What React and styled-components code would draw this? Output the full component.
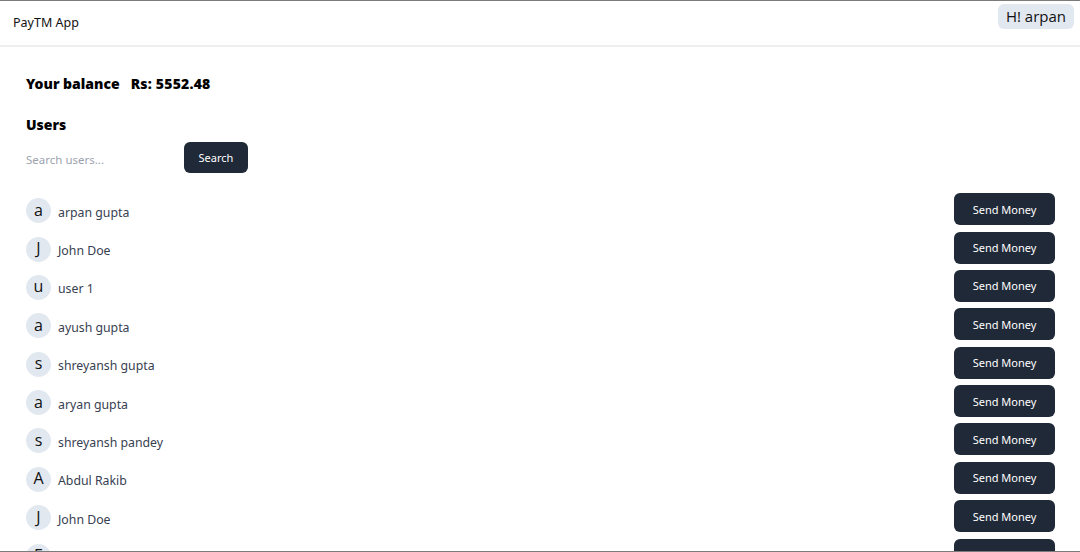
import styled, { createGlobalStyle } from "styled-components";

const GlobalStyle = createGlobalStyle`
  body {
    margin: 0;
    font-family: "Noto Sans", "Open Sans", sans-serif;
    background: #ffffff;
  }
`;

const users = [
  "arpan gupta",
  "John Doe",
  "user 1",
  "ayush gupta",
  "shreyansh gupta",
  "aryan gupta",
  "shreyansh pandey",
  "Abdul Rakib",
  "John Doe",
  "Emma Stone",
];

export default function App() {
  return (
    <Page>
      <GlobalStyle />
      <AppBar>
        <Brand>PayTM App</Brand>
        <Greeting>H! arpan</Greeting>
      </AppBar>
      <Main>
        <Balance>
          Your balance <Amount>Rs: 5552.48</Amount>
        </Balance>
        <Heading>Users</Heading>
        <SearchRow>
          <SearchInput placeholder="Search users..." />
          <DarkButton $small>Search</DarkButton>
        </SearchRow>
        <List>
          {users.map((name, i) => (
            <Row key={i}>
              <UserInfo>
                <Avatar>{name[0]}</Avatar>
                <Name>{name}</Name>
              </UserInfo>
              <DarkButton>Send Money</DarkButton>
            </Row>
          ))}
        </List>
      </Main>
    </Page>
  );
}

const Page = styled.div`
  height: 552px;
  box-sizing: border-box;
  border-top: 1px solid #7b7b7b;
  border-bottom: 1px solid #7b7b7b;
  overflow: hidden;
`;

const AppBar = styled.header`
  height: 44px;
  display: flex;
  justify-content: space-between;
  align-items: flex-start;
  padding: 0 6px 0 13px;
  border-bottom: 2px solid #eeeeee;
`;

const Brand = styled.div`
  font-size: 12.5px;
  line-height: 44px;
  color: #111;
`;

const Greeting = styled.div`
  margin-top: 3px;
  padding: 2px 8px;
  background: #e2e8f0;
  border-radius: 6px;
  font-family: "Open Sans", "Noto Sans", sans-serif;
  font-size: 15px;
  line-height: 21px;
  color: #111;
`;

const Main = styled.main`
  padding: 27px 25px 0 26px;
`;

const Balance = styled.div`
  font-size: 14px;
  font-weight: 900;
  line-height: 20px;
  color: #000;
  display: flex;
  align-items: baseline;
  gap: 11px;
`;

const Amount = styled.span`
  letter-spacing: 0.2px;
`;

const Heading = styled.div`
  margin-top: 21px;
  font-size: 14px;
  font-weight: 900;
  line-height: 20px;
  color: #000;
`;

const SearchRow = styled.div`
  margin-top: 7px;
  display: flex;
  align-items: center;
  gap: 8px;
`;

const SearchInput = styled.input`
  width: 150px;
  border: none;
  outline: none;
  padding: 0;
  margin-top: 4px;
  font-family: inherit;
  font-size: 11.5px;
  color: #374151;
  &::placeholder {
    color: #9ca3af;
  }
`;

const DarkButton = styled.button`
  width: ${(p) => (p.$small ? "64px" : "101px")};
  height: ${(p) => (p.$small ? "31px" : "32px")};
  border: none;
  border-radius: 6px;
  background: #1f2937;
  color: #ffffff;
  font-family: "Noto Sans", "Open Sans", sans-serif;
  font-size: 11px;
  cursor: pointer;
`;

const List = styled.div`
  margin-top: 17px;
`;

const Row = styled.div`
  display: flex;
  justify-content: space-between;
  align-items: center;
  padding: 3.2px 0;
`;

const UserInfo = styled.div`
  display: flex;
  align-items: center;
  gap: 7px;
  padding-top: 3px;
`;

const Avatar = styled.div`
  width: 25px;
  height: 25px;
  border-radius: 50%;
  background: #e2e8f0;
  display: flex;
  align-items: center;
  justify-content: center;
  font-family: "Open Sans", "Noto Sans", sans-serif;
  font-size: 16px;
  color: #111;
  padding-bottom: 2px;
  box-sizing: border-box;
`;

const Name = styled.div`
  font-size: 12.3px;
  padding-top: 3px;
  color: #374151;
`;
